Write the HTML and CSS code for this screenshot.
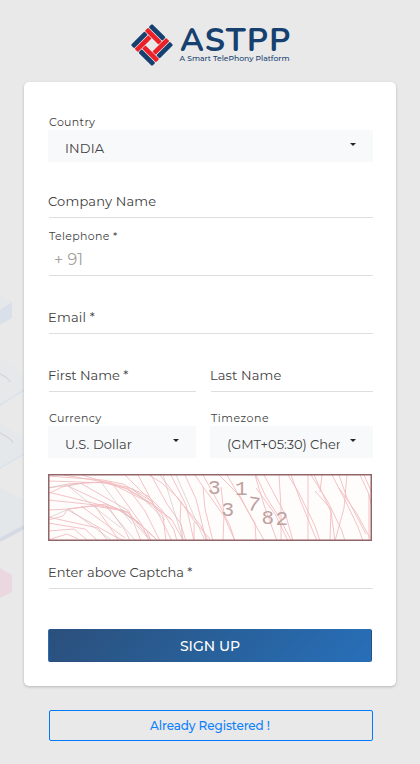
FILE: index.html
```
<!DOCTYPE html>
<html lang="en">
<head>
<meta charset="utf-8">
<title>ASTPP - Sign up</title>
<link rel="stylesheet" href="styles.css">
</head>
<body>
<svg class="backdrop" width="24" height="340" viewBox="0 0 24 340" fill="none">
  <path d="M0 15L12 22L0 30Z" fill="#e5e8ea"/>
  <path d="M0 30L12 22V38L0 45Z" fill="#d9e0e9"/>
  <path d="M0 79L24 92V110L0 125Z" fill="#e7e8e9"/>
  <path d="M0 143L24 158V174L0 188Z" fill="#e5e8ea"/>
  <path d="M0 207L24 221V246L0 259Z" fill="#e4e7e9"/>
  <path d="M0 94Q9 98 10 102M0 153Q12 159 13 163" stroke="#d6d7e0" stroke-width="1.500"/>
  <path d="M0 125L24 110M0 188L24 174" stroke="#dae2ea" stroke-width="1.500"/>
  <path d="M0 260L24 247" stroke="#d4dbe4" stroke-width="4"/>
  <path d="M0 288L12 295V312L0 318Z" fill="#ead7e0"/>
</svg>
<main class="page">
  <svg class="logo" width="164" height="44" viewBox="0 0 164 44">
    <defs>
      <g id="bars">
        <rect x="-15" y="-15" width="19.300" height="4.800" rx="1.200" fill="#15406f"/>
        <rect x="-15" y="-9.500" width="19.300" height="4.600" rx=".8" fill="#ec2027"/>
      </g>
    </defs>
    <g transform="translate(22 22) rotate(45)">
      <use href="#bars"/>
      <use href="#bars" transform="rotate(90)"/>
      <use href="#bars" transform="rotate(180)"/>
      <use href="#bars" transform="rotate(270)"/>
    </g>
    <text class="logo-name" x="50" y="27.500" textLength="110">ASTPP</text>
    <text class="logo-tag" x="49.500" y="38" textLength="110" lengthAdjust="spacingAndGlyphs">A Smart TelePhony Platform</text>
  </svg>

  <form class="card">
    <div class="field country">
      <label class="small">Country</label>
      <div class="select"><span class="w-india">INDIA</span><i class="caret"></i></div>
    </div>
    <div class="field line company"><label class="w-company">Company Name</label></div>
    <div class="field line phone">
      <label class="small">Telephone *</label>
      <span class="prefix">+ 91</span>
    </div>
    <div class="field line email"><label class="w-email">Email *</label></div>
    <div class="row names">
      <div class="field line"><label>First Name *</label></div>
      <div class="field line"><label class="w-last">Last Name</label></div>
    </div>
    <div class="row choices">
      <div class="field">
        <label class="small">Currency</label>
        <div class="select"><span class="w-dollar">U.S. Dollar</span><i class="caret"></i></div>
      </div>
      <div class="field">
        <label class="small w-zone">Timezone</label>
        <div class="select"><span class="w-gmt">(GMT+05:30) Chennai</span><i class="caret"></i></div>
      </div>
    </div>
    <svg class="captcha" width="324" height="67" viewBox="0 0 324 67" fill="none">
      <rect width="324" height="67" fill="#fffdfc"/>
      <g stroke="#f2bcc0" stroke-width=".9">
        <path d="M0 20L14 13L35 9L64 8M0 14L20 10L53 8L80 15L106 31L124 46L135 66"/>
        <path d="M0 7L62 9L82 14L100 22L114 36L126 56L129 67M0 2L55 6L75 10L105 28"/>
        <path d="M16 1L62 9L98 27L124 46M34 1L77 14L106 31"/>
        <path d="M0 46L15 42L20 35L45 32L71 36L86 45L108 65M0 36L20 35L58 30L80 39L99 57L103 67"/>
        <path d="M0 26L48 31L72 36L91 49L110 67M0 18L53 31L80 38L102 65M20 12L69 35L91 49"/>
        <path d="M34 10L81 37L93 67M64 9L94 51L101 67M79 13L97 37L112 67"/>
        <path d="M0 66L19 60L30 65M0 57L26 55L39 66M0 49L37 55L50 67M0 43L50 54L60 67"/>
        <path d="M20 36L66 62L77 67M33 32L77 64M47 32L68 62L70 67M59 31L78 58L82 67"/>
        <path d="M77 1L103 27L115 42L118 67M90 1L106 31L124 67M103 1L119 30L133 50L135 67"/>
        <path d="M101 1L114 9L130 24L147 48L162 65M112 1L131 26L153 52L160 67M123 1L138 31L146 67"/>
        <path d="M137 1L148 25L158 66M147 1L158 17L176 42L187 67M155 1L170 28L182 52L187 67"/>
        <path d="M133 27L132 48L138 67M146 48L146 67M155 13L157 35L165 67"/>
        <path d="M171 1L192 22L204 45L216 66M179 1L197 32L207 49L208 67M173 13L176 40L175 67"/>
        <path d="M207 1L216 31L229 67M208 14L227 40L240 67M216 1L238 42L245 67"/>
        <path d="M208 1L218 23L231 43L243 66M231 1L233 34L233 67"/>
        <path d="M243 1L253 28L269 67M240 1L251 19L267 52L272 67M260 1L260 67"/>
        <path d="M263 1L280 28L294 57L297 67M266 1L283 38L287 67M274 1L272 18M267 17L283 35L282 67"/>
        <path d="M284 1L297 26L310 53L315 67M291 1L299 24L318 60M299 1L296 34L287 67M291 14L309 40L322 64"/>
        <path d="M312 1L320 18L324 32M316 1L324 19M321 20V67"/>
      </g>
      <g stroke="#c9c0c1" stroke-width=".6">
        <path d="M0 14L35 9M53 8L84 50M74 35L99 63M115 1L135 66M128 1L157 67M57 31L87 66M84 14L117 46M20 12L73 54M0 44L21 35L62 65"/>
      </g>
      <g class="digits">
        <text x="160" y="19.500">3</text><text x="187" y="20.500">1</text><text x="173.500" y="42">3</text>
        <text x="199.500" y="37" transform="rotate(10 206 31)">7</text><text x="213.500" y="50">8</text><text x="227.500" y="51">2</text>
      </g>
      <rect x=".75" y=".75" width="322.500" height="65.500" stroke="#936568" stroke-width="1.500"/>
    </svg>
    <div class="field line code"><label>Enter above Captcha *</label></div>
    <button type="button" class="submit">SIGN UP</button>
  </form>
  <a class="registered">Already Registered !</a>
</main>
</body>
</html>
```
FILE: styles.css
```
* { box-sizing: border-box; }
body {
  margin: 0;
  height: 764px;
  overflow: hidden;
  background: #e9e9e9;
  color: #404040;
  font-family: Montserrat, Inter, sans-serif;
  font-size: 13px;
}
.backdrop { position: absolute; left: 0; top: 280px; }
.page { position: relative; padding: 23px 24px 0; }
.logo { display: block; margin: 0 0 15px 106px; overflow: visible; }
.logo-name { font: 700 32px Nunito, Lato, sans-serif; fill: #15406f; }
.logo-tag { font: 500 8px Montserrat, Inter, sans-serif; fill: #15406f; }
.card {
  height: 604px;
  padding: 30px 23px 0 24px;
  background: #fff;
  border-radius: 5px;
  box-shadow: 0 1px 3px rgba(0, 0, 0, .22);
}
.field { display: flex; flex-direction: column; min-width: 0; }
.field label { line-height: 20px; white-space: nowrap; }
.field .small { height: 18px; padding-left: 1px; font-size: 11px; line-height: 20px; letter-spacing: .33px; }
.line {
  justify-content: flex-end;
  background: linear-gradient(#dedede, #dedede) 1px 100% / 100% 1px no-repeat;
}
.line > label { margin-bottom: 7px; }
.select {
  display: flex;
  justify-content: space-between;
  height: 32px;
  padding: 0 17px;
  background: #f8f9fb;
}
.select span { flex: 1; min-width: 0; overflow: hidden; line-height: 37px; white-space: nowrap; }
.caret {
  margin: 13px 0 0 10px;
  width: 0;
  height: 0;
  border: 3px solid transparent;
  border-top-color: #212529;
  border-bottom: 0;
}
.company { height: 56px; }
.phone { height: 58px; }
.phone .small { margin: 0 0 1px; }
.prefix { height: 31px; padding-left: 6px; color: #a0a0a0; font-size: 16px; font-weight: 400; line-height: 29px; }
.email { height: 58px; }
.row { display: grid; grid-template-columns: 148px 163px; column-gap: 14px; }
.names .field { height: 58px; }
.choices { margin-top: 16px; }
.captcha { display: block; margin-top: 16px; }
.digits { fill: #bea1a0; font: 21px "Liberation Mono", monospace; }
.code { height: 48px; }
.submit {
  display: block;
  width: 324px;
  height: 33px;
  margin-top: 40px;
  padding: 0;
  border: 1px solid transparent;
  border-radius: 2px;
  background: linear-gradient(135deg, #2b4f7b, #286099 50%, #286fb9);
  color: #fff;
  font: 500 14px/30px Montserrat, Inter, sans-serif;
}
.registered {
  display: block;
  width: 324px;
  height: 31px;
  margin: 24px 0 0 25px;
  padding-right: 2px;
  border: 1px solid #007bff;
  border-radius: 2px;
  color: #0d80fb;
  font-size: 12px;
  font-weight: 500;
  line-height: 29px;
  text-align: center;
  letter-spacing: -.1px;
}
.field .w-zone { letter-spacing: .5px; }
.w-company { letter-spacing: .18px; }
.w-last, .w-india { letter-spacing: .14px; }
.w-email { letter-spacing: .2px; }
.w-dollar { letter-spacing: .08px; }
.w-gmt { letter-spacing: -.05px; }
```
